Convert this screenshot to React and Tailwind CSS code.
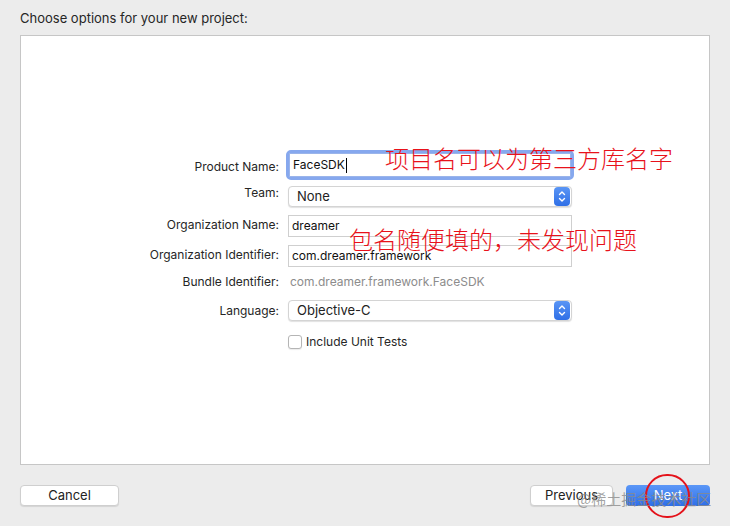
import React from "react"

const font = { fontFamily: "Inter, 'Noto Sans', 'Liberation Sans', sans-serif" }

function Stepper() {
  return (
    <div className="w-[16px] h-[19px] rounded-[4px] bg-gradient-to-b from-[#5a95f5] to-[#2f6fe6] flex items-center justify-center">
      <svg width="8" height="13" viewBox="0 0 8 13" fill="none" stroke="white" strokeWidth="1.4" strokeLinecap="round" strokeLinejoin="round">
        <path d="M1.5 4.5 L4 2 L6.5 4.5" />
        <path d="M1.5 8.5 L4 11 L6.5 8.5" />
      </svg>
    </div>
  )
}

function Popup({ value }) {
  return (
    <div className="w-[284px] h-[21px] bg-white rounded-[4px] border border-[#d4d4d4] shadow-[0_1px_1px_rgba(0,0,0,0.12)] flex items-center justify-between pl-[8px] pr-[1px]">
      <span className="text-[13px] text-[#222]">{value}</span>
      <Stepper />
    </div>
  )
}

function Label({ children, pt }) {
  return (
    <div className={`w-[258px] text-right text-[12px] leading-[16px] text-[#262626] ${pt}`}>
      {children}
    </div>
  )
}

export default function App() {
  return (
    <div className="relative w-[730px] h-[526px] bg-[#ececec] overflow-hidden" style={font}>
      <div className="pl-[20px] pt-[10px] text-[13px] leading-[16px] text-[#262626]">
        Choose options for your new project:
      </div>

      {/* main panel */}
      <div className="ml-[20px] mt-[9px] w-[690px] h-[430px] bg-white border border-[#c6c6c6] flex flex-col pt-[114px]">
        {/* Product Name */}
        <div className="flex items-start h-[30px]">
          <Label pt="pt-[9px]">Product Name:</Label>
          <div className="ml-[7px] w-[288px] h-[30px] rounded-[5px] border-[3px] border-[#86a8ee] flex">
            <div className="flex-1 bg-white border border-[#9ab4ea] flex items-center pl-[3px] text-[12px] text-[#111]">
              FaceSDK<span className="w-[1px] h-[15px] bg-black ml-[1px]" />
            </div>
          </div>
        </div>

        {/* Team */}
        <div className="flex items-start mt-[5px]">
          <Label pt="pt-0">Team:</Label>
          <div className="ml-[9px] mt-[1px]">
            <Popup value="None" />
          </div>
        </div>

        {/* Organization Name */}
        <div className="flex items-start mt-[8px]">
          <Label pt="pt-[2px]">Organization Name:</Label>
          <div className="ml-[9px] w-[284px] h-[22px] border border-[#cfcfcf] bg-white flex items-center pl-[3px] text-[12px] text-[#111]">
            dreamer
          </div>
        </div>

        {/* Organization Identifier */}
        <div className="flex items-start mt-[8px]">
          <Label pt="pt-[2px]">Organization Identifier:</Label>
          <div className="ml-[9px] w-[284px] h-[22px] border border-[#cfcfcf] bg-white flex items-center pl-[3px] text-[12px] text-[#111]">
            com.dreamer.framework
          </div>
        </div>

        {/* Bundle Identifier */}
        <div className="flex items-start mt-[7px]">
          <Label pt="pt-0">Bundle Identifier:</Label>
          <div className="ml-[11px] text-[12px] leading-[16px] text-[#8c8c8c]">
            com.dreamer.framework.FaceSDK
          </div>
        </div>

        {/* Language */}
        <div className="flex items-start mt-[10px]">
          <Label pt="pt-[3px]">Language:</Label>
          <div className="ml-[9px]">
            <Popup value="Objective-C" />
          </div>
        </div>

        {/* Include Unit Tests */}
        <div className="flex items-center mt-[13px] ml-[267px]">
          <div className="w-[14px] h-[14px] rounded-[3px] border border-[#b5b5b5] bg-white shadow-[0_1px_1px_rgba(0,0,0,0.08)]" />
          <span className="ml-[4px] text-[12px] leading-[16px] text-[#262626]">Include Unit Tests</span>
        </div>
      </div>

      {/* bottom buttons */}
      <div className="flex items-center mt-[20px] px-[20px]">
        <button className="w-[99px] h-[21px] bg-white border border-[#cfcfcf] rounded-[4px] shadow-[0_1px_1px_rgba(0,0,0,0.1)] text-[13px] text-[#222]">
          Cancel
        </button>
        <div className="flex-1" />
        <button className="w-[83px] h-[21px] bg-white border border-[#cfcfcf] rounded-[4px] shadow-[0_1px_1px_rgba(0,0,0,0.1)] text-[13px] text-[#222]">
          Previous
        </button>
        <button className="ml-[13px] w-[84px] h-[21px] rounded-[4px] bg-gradient-to-b from-[#5b97f7] to-[#2e6ee7] text-[13px] text-white">
          Next
        </button>
      </div>

      {/* red annotations */}
      <div
        className="absolute left-[385px] top-[144px] text-[24px] leading-[28px] text-[#e8121b] whitespace-nowrap"
        style={{ fontFamily: "'Noto Sans CJK SC', sans-serif", fontWeight: 300 }}
      >
        项目名可以为第三方库名字
      </div>
      <div
        className="absolute left-[349px] top-[225px] text-[24px] leading-[28px] text-[#e8121b] whitespace-nowrap"
        style={{ fontFamily: "'Noto Sans CJK SC', sans-serif", fontWeight: 300 }}
      >
        包名随便填的，未发现问题
      </div>

      {/* red circle around Next */}
      <div className="absolute left-[645px] top-[474px] w-[45px] h-[44px] rounded-full border-[2.5px] border-[#e4121a]" />

      {/* watermark */}
      <div
        className="absolute left-[577px] top-[490px] text-[15px] leading-[18px] text-[#8a8a8a]/80 whitespace-nowrap"
        style={{ fontFamily: "'Noto Sans CJK SC', sans-serif" }}
      >
        @稀土掘金技术社区
      </div>
    </div>
  )
}
